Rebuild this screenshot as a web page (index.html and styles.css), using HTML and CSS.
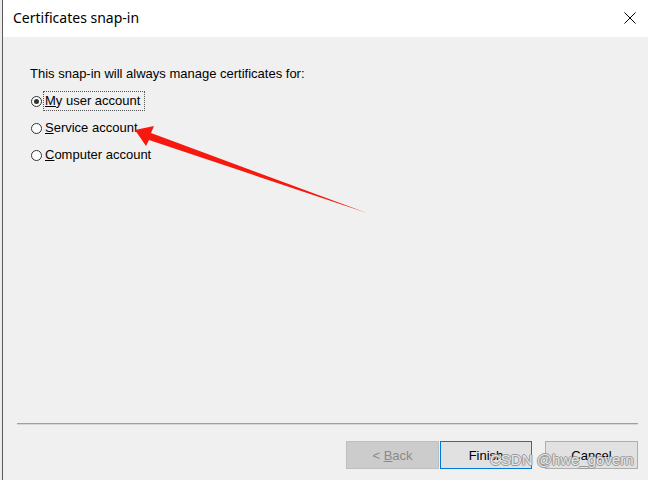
FILE: index.html
```html
<!DOCTYPE html>
<html>
<head>
<meta charset="utf-8">
<link rel="stylesheet" href="styles.css">
</head>
<body>
<div class="screen">
  <div class="edge"></div>
  <div class="dialog">
    <div class="titlebar">
      <span class="title">Certificates snap-in</span>
      <svg class="close" width="12" height="12" viewBox="0 0 12 12"><path d="M0.5 0.5 L11.5 11.5 M11.5 0.5 L0.5 11.5" stroke="#000" stroke-width="1" fill="none"/></svg>
    </div>
    <div class="body">
      <div class="main">
        <p class="heading">This snap-in will always manage certificates for:</p>
        <div class="options">
          <div class="option"><span class="radio checked"></span><span class="label focus"><u>M</u>y user account</span></div>
          <div class="option"><span class="radio"></span><span class="label"><u>S</u>ervice account</span></div>
          <div class="option"><span class="radio"></span><span class="label"><u>C</u>omputer account</span></div>
        </div>
      </div>
      <div class="separator"></div>
      <div class="footer">
        <div class="btn disabled"><span>&lt; <u>B</u>ack</span></div>
        <div class="btn default"><span>Finish</span></div>
        <div class="btn cancel"><span>Cancel</span></div>
      </div>
    </div>
  </div>
  <svg class="arrow" width="648" height="480" viewBox="0 0 648 480">
    <polygon points="135,130 154,126 151,133 367,213 149,140 146,146" fill="#f5190f"/>
  </svg>
  <div class="watermark">CSDN @hwe_govern</div>
</div>
</body>
</html>
```

FILE: styles.css
```css
html, body {
  margin: 0;
  padding: 0;
  background: #f0f0f0;
}
.screen {
  position: relative;
  width: 648px;
  height: 480px;
  display: flex;
  overflow: hidden;
}
.edge {
  width: 2px;
  background: #ececec;
  border-right: 1px solid #5a5a5a;
  flex: none;
}
.dialog {
  flex: 1;
  display: flex;
  flex-direction: column;
}
.titlebar {
  height: 37px;
  background: #ffffff;
  display: flex;
  align-items: center;
  justify-content: space-between;
  padding: 0 12px 0 10px;
  flex: none;
}
.title {
  font-family: "Noto Sans", "Liberation Sans", sans-serif;
  font-size: 14px;
  color: #000;
  margin-top: -2px;
}
.close {
  display: block;
  margin-top: -2px;
}
.body {
  flex: 1;
  display: flex;
  flex-direction: column;
  background: #f0f0f0;
  font-family: "Liberation Sans", Arial, sans-serif;
  font-size: 13px;
  color: #000;
}
.main {
  flex: 1;
  padding: 29px 0 0 27px;
}
.heading {
  margin: 0;
  line-height: 15px;
}
.options {
  margin-top: 10px;
  display: flex;
  flex-direction: column;
  gap: 7px;
}
.option {
  display: flex;
  align-items: center;
  height: 20px;
}
.radio {
  width: 9px;
  height: 9px;
  border: 1px solid #333;
  border-radius: 50%;
  background: #fff;
  margin-left: 1px;
  position: relative;
  flex: none;
}
.radio.checked::after {
  content: "";
  position: absolute;
  left: 2px;
  top: 2px;
  width: 5px;
  height: 5px;
  border-radius: 50%;
  background: #333;
}
.label {
  margin-left: 1px;
  padding: 1px 4px 1px 1px;
  border: 1px solid transparent;
  line-height: 16px;
}
.label.focus {
  border: 1px dotted #555;
}
.separator {
  margin: 0 10px 0 14px;
  height: 1px;
  background: #a0a0a0;
  border-bottom: 1px solid #d8d8d8;
}
.footer {
  display: flex;
  justify-content: flex-end;
  padding: 16px 10px 11px 0;
}
.btn {
  width: 91px;
  height: 26px;
  border: 1px solid #adadad;
  background: #e1e1e1;
  display: flex;
  align-items: center;
  justify-content: center;
  font-size: 13px;
}
.btn.disabled {
  background: #cccccc;
  border-color: #bfbfbf;
  color: #8a8a8a;
}
.btn.default {
  width: 90px;
  border-color: #0078d7;
  margin-left: 1px;
}
.btn.cancel {
  margin-left: 13px;
}
.arrow {
  position: absolute;
  left: 0;
  top: 0;
  pointer-events: none;
}
.watermark {
  position: absolute;
  left: 490px;
  top: 451px;
  font-family: "Liberation Sans", Arial, sans-serif;
  font-size: 15px;
  color: rgba(255, 255, 255, 0.75);
  text-shadow: 1px 0 0 #9a9a9a, -1px 0 0 #9a9a9a, 0 1px 0 #9a9a9a, 0 -1px 0 #9a9a9a;
  pointer-events: none;
}
```
